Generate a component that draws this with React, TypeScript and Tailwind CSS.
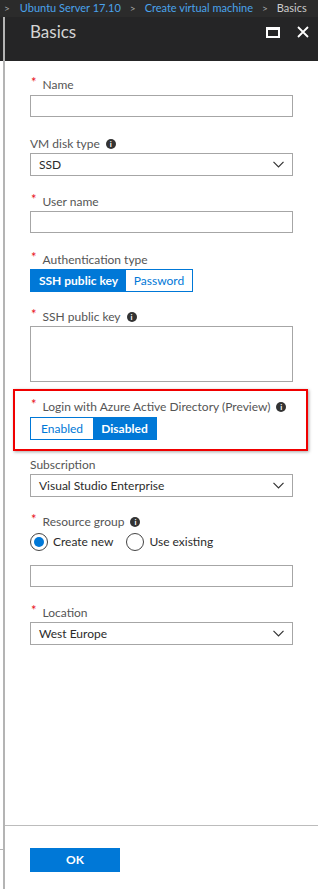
import React from 'react'

const font = { fontFamily: 'Lato, "Noto Sans", sans-serif' }

function Info() {
	return (
		<span className="inline-flex shrink-0 w-[10px] h-[10px] rounded-full bg-[#333333] text-white text-[8px] font-bold items-center justify-center leading-none ml-[6px]">
			i
		</span>
	)
}

function Label({
	text,
	required,
	info,
}: {
	text: string
	required?: boolean
	info?: boolean
}) {
	return (
		<div className="flex items-center h-[18px] text-[12px] text-[#555555] whitespace-nowrap">
			{required && (
				<span className="text-[#e81123] text-[13px] ml-[1px] mr-[6px] -mt-[4px]">
					*
				</span>
			)}
			<span>{text}</span>
			{info && <Info />}
		</div>
	)
}

function TextBox({ h = 'h-[22px]' }: { h?: string }) {
	return <div className={`border border-[#a6a6a6] bg-white ${h}`} />
}

function Select({ value }: { value: string }) {
	return (
		<div className="border border-[#a6a6a6] h-[23px] flex items-center justify-between pl-[8px] pr-[8px] text-[12px] text-[#2b2b2b]">
			<span>{value}</span>
			<svg width="11" height="7" viewBox="0 0 11 7">
				<path d="M0.5 0.8 L5.5 5.8 L10.5 0.8" fill="none" stroke="#333" strokeWidth="1.2" />
			</svg>
		</div>
	)
}

function Toggle({
	left,
	right,
	active,
	leftW,
	rightW,
}: {
	left: string
	right: string
	active: 'left' | 'right'
	leftW: string
	rightW: string
}) {
	const on = 'bg-[#0078d7] text-white font-bold'
	const off = 'bg-white text-[#0078d7]'
	return (
		<div className="flex h-[23px] border border-[#0078d7] w-fit text-[12px]">
			<div className={`${leftW} flex items-center justify-center ${active === 'left' ? on : off}`}>
				{left}
			</div>
			<div className={`${rightW} flex items-center justify-center ${active === 'right' ? on : off}`}>
				{right}
			</div>
		</div>
	)
}

function Radio({ checked, label }: { checked?: boolean; label: string }) {
	return (
		<div className="flex items-center gap-[5px] text-[12px] text-[#2b2b2b]">
			<span className="w-[18px] h-[18px] rounded-full border border-[#444] flex items-center justify-center bg-white">
				{checked && <span className="w-[10px] h-[10px] rounded-full bg-[#0078d7]" />}
			</span>
			<span>{label}</span>
		</div>
	)
}

export default function App() {
	return (
		<div className="w-[318px] h-[889px] bg-white flex flex-col overflow-hidden" style={font}>
			{/* Breadcrumb */}
			<div className="h-[17px] shrink-0 bg-[#2b2b2b] flex items-center pl-[4px] text-[11px] whitespace-nowrap overflow-hidden">
				<span className="text-[#a8a8a8] text-[10px] mr-[10px]">&gt;</span>
				<span className="text-[#4aa3ec]">Ubuntu Server 17.10</span>
				<span className="text-[#a8a8a8] text-[10px] mx-[9px]">&gt;</span>
				<span className="text-[#4aa3ec]">Create virtual machine</span>
				<span className="text-[#a8a8a8] text-[10px] mx-[9px]">&gt;</span>
				<span className="text-[#cccccc]">Basics</span>
			</div>

			<div className="flex flex-1 min-h-0">
				{/* left edge */}
				<div className="w-[3px] shrink-0 flex flex-col">
					<div className="h-[44px] bg-[#252526]" />
					<div className="h-[788px] bg-white" />
					<div className="h-px bg-[#b4b4b4]" />
					<div className="flex-1 bg-white" />
				</div>
				<div className="w-[2px] shrink-0 bg-[#b4b4b4]" />

				{/* Blade */}
				<div className="flex-1 min-w-0 flex flex-col">
					<div className="h-[44px] shrink-0 bg-[#252526] flex items-start justify-between pl-[25px] pr-[9px] pt-[4px]">
						<span className="text-[#d4d4d4] text-[17px] leading-[22px]">Basics</span>
						<div className="flex items-center gap-[17px] h-[22px]">
							<span className="w-[14px] h-[11px] border-white border-x-2 border-t-[3px] border-b-2" />
							<svg width="12" height="12" viewBox="0 0 12 12">
								<path d="M1 1 L11 11 M11 1 L1 11" stroke="white" strokeWidth="1.8" />
							</svg>
						</div>
					</div>

					<div className="flex-1 flex flex-col pl-[25px] pr-[25px]">
						<div className="pt-[15px]">
							<Label text="Name" required />
							<div className="mt-[1px]">
								<TextBox />
							</div>
						</div>

						<div className="mt-[18px]">
							<Label text="VM disk type" info />
							<Select value="SSD" />
						</div>

						<div className="mt-[17px]">
							<Label text="User name" required />
							<TextBox />
						</div>

						<div className="mt-[18px]">
							<Label text="Authentication type" required />
							<Toggle left="SSH public key" right="Password" active="left" leftW="w-[95px]" rightW="w-[66px]" />
						</div>

						<div className="mt-[16px]">
							<Label text="SSH public key" required info />
							<TextBox h="h-[56px]" />
						</div>

						<div className="mt-[7px] -ml-[17px] -mr-[15px] border-2 border-[#f00000] shadow-[1px_1px_3px_rgba(0,0,0,0.35)] pl-[15px] pr-[13px] pt-[7px] pb-[9px]">
							<Label text="Login with Azure Active Directory (Preview)" required info />
							<div className="mt-[1px]">
								<Toggle left="Enabled" right="Disabled" active="right" leftW="w-[62px]" rightW="w-[63px]" />
							</div>
						</div>

						<div className="mt-[5px]">
							<Label text="Subscription" />
							<Select value="Visual Studio Enterprise" />
						</div>

						<div className="mt-[16px]">
							<Label text="Resource group" required info />
							<div className="flex items-center gap-[13px] mt-[2px]">
								<Radio checked label="Create new" />
								<Radio label="Use existing" />
							</div>
							<div className="mt-[14px]">
								<TextBox />
							</div>
						</div>

						<div className="mt-[17px]">
							<Label text="Location" required />
							<Select value="West Europe" />
						</div>

						<div className="flex-1" />
					</div>

					{/* Footer */}
					<div className="h-px shrink-0 bg-[#bcbcbc]" />
					<div className="h-[63px] shrink-0 pl-[25px] pt-[20px]">
						<button className="w-[90px] h-[24px] bg-[#0078d7] text-white text-[12px] font-bold">
							OK
						</button>
					</div>
				</div>
			</div>
		</div>
	)
}
